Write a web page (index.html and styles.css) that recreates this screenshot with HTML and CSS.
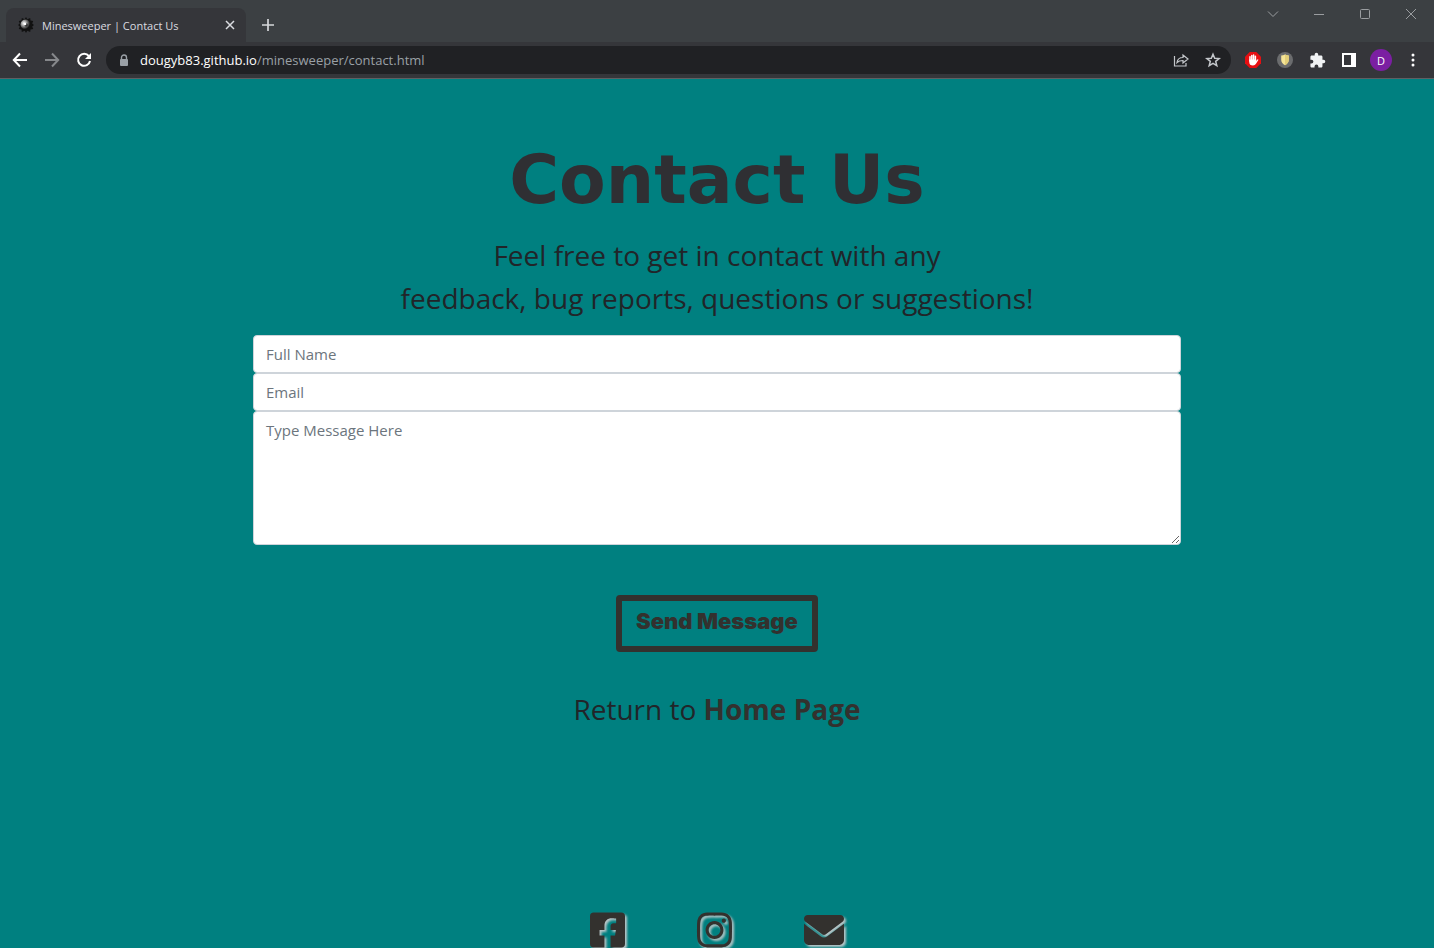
FILE: index.html
```html
<!DOCTYPE html>
<html lang="en">
<head>
<meta charset="utf-8">
<meta name="viewport" content="width=device-width, initial-scale=1">
<title>Minesweeper | Contact Us</title>
<link rel="stylesheet" href="styles.css">
</head>
<body>
<header class="browser">
  <div class="tab-strip">
    <div class="tab">
      <svg class="favicon" viewBox="0 0 16 16" width="16" height="16" aria-hidden="true">
        <defs><radialGradient id="mine" cx=".35" cy=".38" r=".6"><stop offset="0" stop-color="#fff"/><stop offset=".4" stop-color="#aaa"/><stop offset="1" stop-color="#111"/></radialGradient></defs>
        <path d="M8 0l1.300 2.200L12.200 1l.3 2.500 2.700.6-1 2.400L16 8l-1.800 1.500 1 2.400-2.700.6-.3 2.500-2.900-1.200L8 16l-1.300-2.200L3.800 15l-.3-2.500-2.700-.6 1-2.400L0 8l1.800-1.500-1-2.400 2.700-.6L3.800 1l2.900 1.200z" fill="#111"/>
        <circle cx="7.500" cy="7.500" r="5" fill="url(#mine)"/><circle cx="8.200" cy="8" r="1.700" fill="#333"/><circle cx="7" cy="7" r="1.300" fill="#fff"/>
      </svg>
      <span class="tab-title">Minesweeper | Contact Us</span>
      <button class="tab-close" type="button" aria-label="Close tab"><svg viewBox="0 0 10 10" width="10" height="10"><path d="M1 1l8 8M9 1L1 9" stroke="#dadce0" stroke-width="1.500" fill="none"/></svg></button>
    </div>
    <button class="new-tab" type="button" aria-label="New tab"><svg viewBox="0 0 12 12" width="12" height="12"><path d="M6 0v12M0 6h12" stroke="#d5d7da" stroke-width="1.700"/></svg></button>
    <div class="window-controls">
      <button type="button" aria-label="Search tabs"><svg viewBox="0 0 12 12" width="12" height="12"><path d="M1 3.500l5 5 5-5" class="thin"/></svg></button>
      <button type="button" aria-label="Minimize"><svg viewBox="0 0 12 12" width="12" height="12"><path d="M1 6.500h10" class="thin"/></svg></button>
      <button type="button" aria-label="Maximize"><svg viewBox="0 0 12 12" width="12" height="12"><rect x="1.500" y="1.500" width="9" height="9" rx="1" class="thin"/></svg></button>
      <button type="button" aria-label="Close"><svg viewBox="0 0 12 12" width="12" height="12"><path d="M1 1l10 10M11 1L1 11" class="thin"/></svg></button>
    </div>
  </div>
  <div class="toolbar">
    <div class="tools">
      <button type="button" aria-label="Back"><svg viewBox="0 0 16 16" width="16" height="16"><path d="M15 8H2.500M8 1.500L1.800 8 8 14.500" stroke="#fff" stroke-width="2" fill="none"/></svg></button>
      <button type="button" aria-label="Forward"><svg viewBox="0 0 16 16" width="16" height="16"><path d="M1 8h12.500M8 1.500L14.200 8 8 14.500" stroke="#86888b" stroke-width="2" fill="none"/></svg></button>
      <button type="button" aria-label="Reload"><svg viewBox="0 0 16 16" width="16" height="16"><path d="M12.900 4.200A6 6 0 1 0 14 9" stroke="#fff" stroke-width="2" fill="none"/><path d="M15 1v6H9z" fill="#fff"/></svg></button>
    </div>
    <div class="address">
      <svg viewBox="0 0 10 13" width="10" height="13" aria-hidden="true"><path d="M2.500 6V3.500a2.500 2.500 0 0 1 5 0V6" fill="none" stroke="#9aa0a6" stroke-width="1.400"/><rect x="1" y="5" width="8" height="7" rx="1" fill="#9aa0a6"/></svg>
      <div class="url"><span class="host">dougyb83.github.io</span>/minesweeper/contact.html</div>
      <button type="button" aria-label="Share"><svg viewBox="0 0 16 16" width="16" height="16"><path d="M1.500 4v10h11.500v-3M4 10.500c.5-3.500 2.500-5 6-5V3l5 4-5 4V8.500c-3 0-4.500.5-6 2z" fill="none" stroke="#c4c7cb" stroke-width="1.200"/></svg></button>
      <button type="button" aria-label="Bookmark"><svg viewBox="0 0 16 16" width="16" height="16"><path d="M8 2.200l1.700 4.100 4.400.3-3.400 2.800 1.100 4.300L8 11.300l-3.800 2.400 1.100-4.300-3.400-2.800 4.400-.3z" fill="none" stroke="#c4c7cb" stroke-width="1.500"/></svg></button>
    </div>
    <div class="tools">
      <button type="button" aria-label="Ad blocker"><svg viewBox="0 0 16 16" width="16" height="16"><path d="M4.700 0h6.600L16 4.700v6.600L11.300 16H4.700L0 11.300V4.700z" fill="#e60f12"/><path d="M5 9V4.800M6.800 8V3.500M8.600 8V3M10.400 9V4.200" stroke="#fff" stroke-width="1.500" stroke-linecap="round"/><path d="M4.250 7.500h6.900v1.400l1.200-1.500q1.100-.3 1 .6L11 11.700Q10 13.500 8 13.500q-3.750 0-3.750-3.500z" fill="#fff"/></svg></button>
      <button type="button" aria-label="Shield extension"><svg viewBox="0 0 16 16" width="16" height="16"><circle cx="8" cy="8" r="8" fill="#6b6c6e"/><path d="M8 2.500q2 1 3.800 1v4.500q-.3 3.500-3.800 5.300-3.500-1.800-3.800-5.300V3.500q2 0 3.800-1z" fill="#f5e496"/><path d="M8 2.500q2 1 3.800 1v4.500q-.3 3.500-3.800 5.300z" fill="#e3cf78"/></svg></button>
      <button type="button" aria-label="Extensions"><svg viewBox="0 0 24 24" width="17" height="17"><path d="M20.500 11H19V7c0-1.100-.9-2-2-2h-4V3.500a2.500 2.500 0 0 0-5 0V5H4c-1.100 0-2 .9-2 2v3.800h1.500a2.700 2.700 0 0 1 0 5.400H2V20c0 1.100.9 2 2 2h3.800v-1.500a2.700 2.700 0 0 1 5.400 0V22H17c1.100 0 2-.9 2-2v-4h1.500a2.500 2.500 0 0 0 0-5z" fill="#f1f3f4"/></svg></button>
      <button type="button" aria-label="Side panel"><svg viewBox="0 0 14 14" width="14" height="14"><path d="M0 0h14v14H0zM2 2v10h7V2z" fill="#fff" fill-rule="evenodd"/></svg></button>
      <button type="button" aria-label="Profile"><span class="avatar">D</span></button>
      <button type="button" aria-label="Menu"><svg viewBox="0 0 4 14" width="4" height="14"><circle cx="2" cy="2" r="1.500" fill="#fff"/><circle cx="2" cy="7" r="1.500" fill="#fff"/><circle cx="2" cy="12" r="1.500" fill="#fff"/></svg></button>
    </div>
  </div>
</header>
<div class="page">
  <main class="contact">
    <h1>Contact Us</h1>
    <p class="lead">Feel free to get in contact with any<br>feedback, bug reports, questions or suggestions!</p>
    <form class="form">
      <input class="field" type="text" placeholder="Full Name" aria-label="Full Name">
      <input class="field" type="email" placeholder="Email" aria-label="Email">
      <textarea class="field message" placeholder="Type Message Here" aria-label="Message"></textarea>
      <button class="send" type="submit">Send Message</button>
    </form>
    <p class="lead">Return to <a class="home" href="#">Home Page</a></p>
  </main>
  <footer class="social">
    <a href="#" aria-label="Facebook"><svg viewBox="0 0 448 512" width="35" height="40"><path d="M400 32H48A48 48 0 0 0 0 80v352a48 48 0 0 0 48 48h137.250V327.690h-63V256h63v-54.640c0-62.150 37-96.480 93.670-96.480 27.140 0 55.520 4.840 55.520 4.840v61h-31.270c-30.810 0-40.420 19.120-40.420 38.730V256h68.780l-11 71.690h-57.780V480H400a48 48 0 0 0 48-48V80a48 48 0 0 0-48-48z"/></svg></a>
    <a href="#" aria-label="Instagram"><svg viewBox="0 0 448 512" width="35" height="40"><path d="M224.1 141c-63.6 0-114.9 51.3-114.9 114.9s51.3 114.9 114.9 114.9S339 319.5 339 255.9 287.7 141 224.1 141zm0 189.600c-41.1 0-74.7-33.5-74.7-74.7s33.5-74.7 74.7-74.7 74.7 33.5 74.7 74.7-33.6 74.7-74.7 74.7zm146.4-194.300c0 14.9-12 26.8-26.8 26.8-14.9 0-26.8-12-26.8-26.8s12-26.8 26.8-26.8 26.8 12 26.8 26.8zm76.1 27.200c-1.7-35.9-9.9-67.7-36.2-93.9-26.2-26.2-58-34.4-93.9-36.2-37-2.1-147.9-2.1-184.9 0-35.8 1.7-67.6 9.9-93.9 36.1s-34.4 58-36.2 93.9c-2.1 37-2.1 147.9 0 184.9 1.7 35.9 9.9 67.7 36.2 93.9s58 34.4 93.9 36.2c37 2.1 147.9 2.1 184.9 0 35.9-1.7 67.7-9.9 93.9-36.2 26.2-26.2 34.4-58 36.2-93.9 2.1-37 2.1-147.8 0-184.800zM398.8 388c-7.8 19.6-22.9 34.7-42.6 42.6-29.5 11.7-99.5 9-132.1 9s-102.7 2.6-132.1-9c-19.6-7.8-34.7-22.9-42.6-42.6-11.7-29.5-9-99.5-9-132.1s-2.6-102.7 9-132.1c7.8-19.6 22.9-34.7 42.6-42.6 29.5-11.7 99.5-9 132.1-9s102.7-2.6 132.1 9c19.6 7.8 34.7 22.9 42.6 42.6 11.7 29.5 9 99.5 9 132.1s2.7 102.7-9 132.1z"/></svg></a>
    <a href="#" aria-label="Email"><svg viewBox="0 0 512 512" width="40" height="40"><path d="M464 64C490.5 64 512 85.490 512 112C512 127.100 504.900 141.300 492.800 150.400L275.200 313.600C263.800 322.100 248.200 322.100 236.800 313.600L19.200 150.400C7.113 141.300 0 127.100 0 112C0 85.490 21.490 64 48 64H464zM217.600 339.200C240.400 356.300 271.600 356.300 294.400 339.200L512 176V384C512 419.300 483.300 448 448 448H64C28.650 448 0 419.300 0 384V176L217.600 339.200z"/></svg></a>
  </footer>
</div>
</body>
</html>
```
FILE: styles.css
```css
* { box-sizing: border-box; }

body {
  margin: 0;
  height: 100vh;
  display: flex;
  flex-direction: column;
  overflow: hidden;
  background: #008080;
  color: #212529;
  font-family: "Open Sans", "Noto Sans", sans-serif;
}

button {
  margin: 0;
  padding: 0;
  border: 0;
  background: none;
  font: inherit;
  color: inherit;
  cursor: pointer;
}

svg { display: block; overflow: visible; }

/* Browser window frame */
.browser {
  flex: none;
  background: #35363a;
  border-bottom: 1px solid #5f6063;
}

.tab-strip {
  display: flex;
  height: 42px;
  padding-left: 6px;
  background: #3c4043;
}

.tab {
  display: flex;
  align-items: center;
  gap: 8px;
  width: 240px;
  margin-top: 8px;
  padding: 0 8px 0 12px;
  border-radius: 8px 8px 0 0;
  background: #35363a;
  color: #dadce0;
  font-size: 11px;
}

.tab-title { flex: 1; white-space: nowrap; }

.tab-close, .new-tab { display: grid; place-items: center; }
.tab-close { width: 16px; height: 16px; }
.new-tab { width: 28px; height: 28px; margin: 11px 0 0 8px; }

.window-controls {
  display: flex;
  margin-left: auto;
}

.window-controls button {
  display: grid;
  place-items: center;
  width: 46px;
  height: 28px;
}

.thin { fill: none; stroke: #9a9da0; stroke-width: 1; }

.toolbar {
  display: flex;
  align-items: center;
  gap: 6px;
  height: 36px;
  padding: 0 5px 0 4px;
}

.tools { display: flex; }

.tools button {
  display: grid;
  place-items: center;
  width: 32px;
  height: 32px;
}

.address {
  flex: 1;
  display: flex;
  align-items: center;
  height: 28px;
  padding: 0 10px 0 13px;
  gap: 16px;
  border-radius: 14px;
  background: #202124;
}

.url {
  flex: 1;
  margin-left: -5px;
  color: #9aa0a6;
  font-size: 13px;
  white-space: nowrap;
}

.host { color: #fff; }

.avatar {
  display: grid;
  place-items: center;
  width: 22px;
  height: 22px;
  border-radius: 50%;
  background: #7b1fa2;
  color: #fff;
  font-size: 11px;
}

/* Contact page */
.page {
  flex: 1;
  min-height: 0;
  overflow: hidden;
  padding: 63px 16px 0;
}

.contact {
  display: flex;
  flex-direction: column;
  align-items: center;
  text-align: center;
}

h1 {
  margin: 0 0 16px;
  color: #2f2f33;
  font-family: "DejaVu Sans", sans-serif;
  font-size: 68px;
  font-weight: 700;
  line-height: 76px;
}

.lead {
  margin: 0 0 15px;
  font-size: 28px;
  line-height: 43px;
}

.home {
  color: #33312e;
  font-weight: 700;
  text-decoration: none;
}

.form {
  display: flex;
  flex-direction: column;
  align-items: center;
  width: 100%;
  max-width: 928px;
  margin-bottom: 36px;
}

.field {
  display: block;
  width: 100%;
  height: 38px;
  padding: 6px 12px;
  border: 1px solid #ced4da;
  border-radius: 4px;
  background: #fff;
  color: #212529;
  font-family: inherit;
  font-size: 15px;
  line-height: 24px;
}

.field::placeholder { color: #6c757d; opacity: 1; }

.message { height: 134px; resize: vertical; }

.send {
  margin-top: 50px;
  padding: 2px 14px 7px;
  border: 6px solid #33312e;
  border-radius: 4px;
  color: #33312e;
  font-family: Inter, sans-serif;
  font-size: 22px;
  font-weight: 900;
  line-height: 36px;
}

.social {
  display: flex;
  justify-content: center;
  gap: 72px;
  padding-top: 164px;
}

.social svg {
  fill: #33312e;
  filter: drop-shadow(2px 2px 1px #b8c4c6);
}
```
